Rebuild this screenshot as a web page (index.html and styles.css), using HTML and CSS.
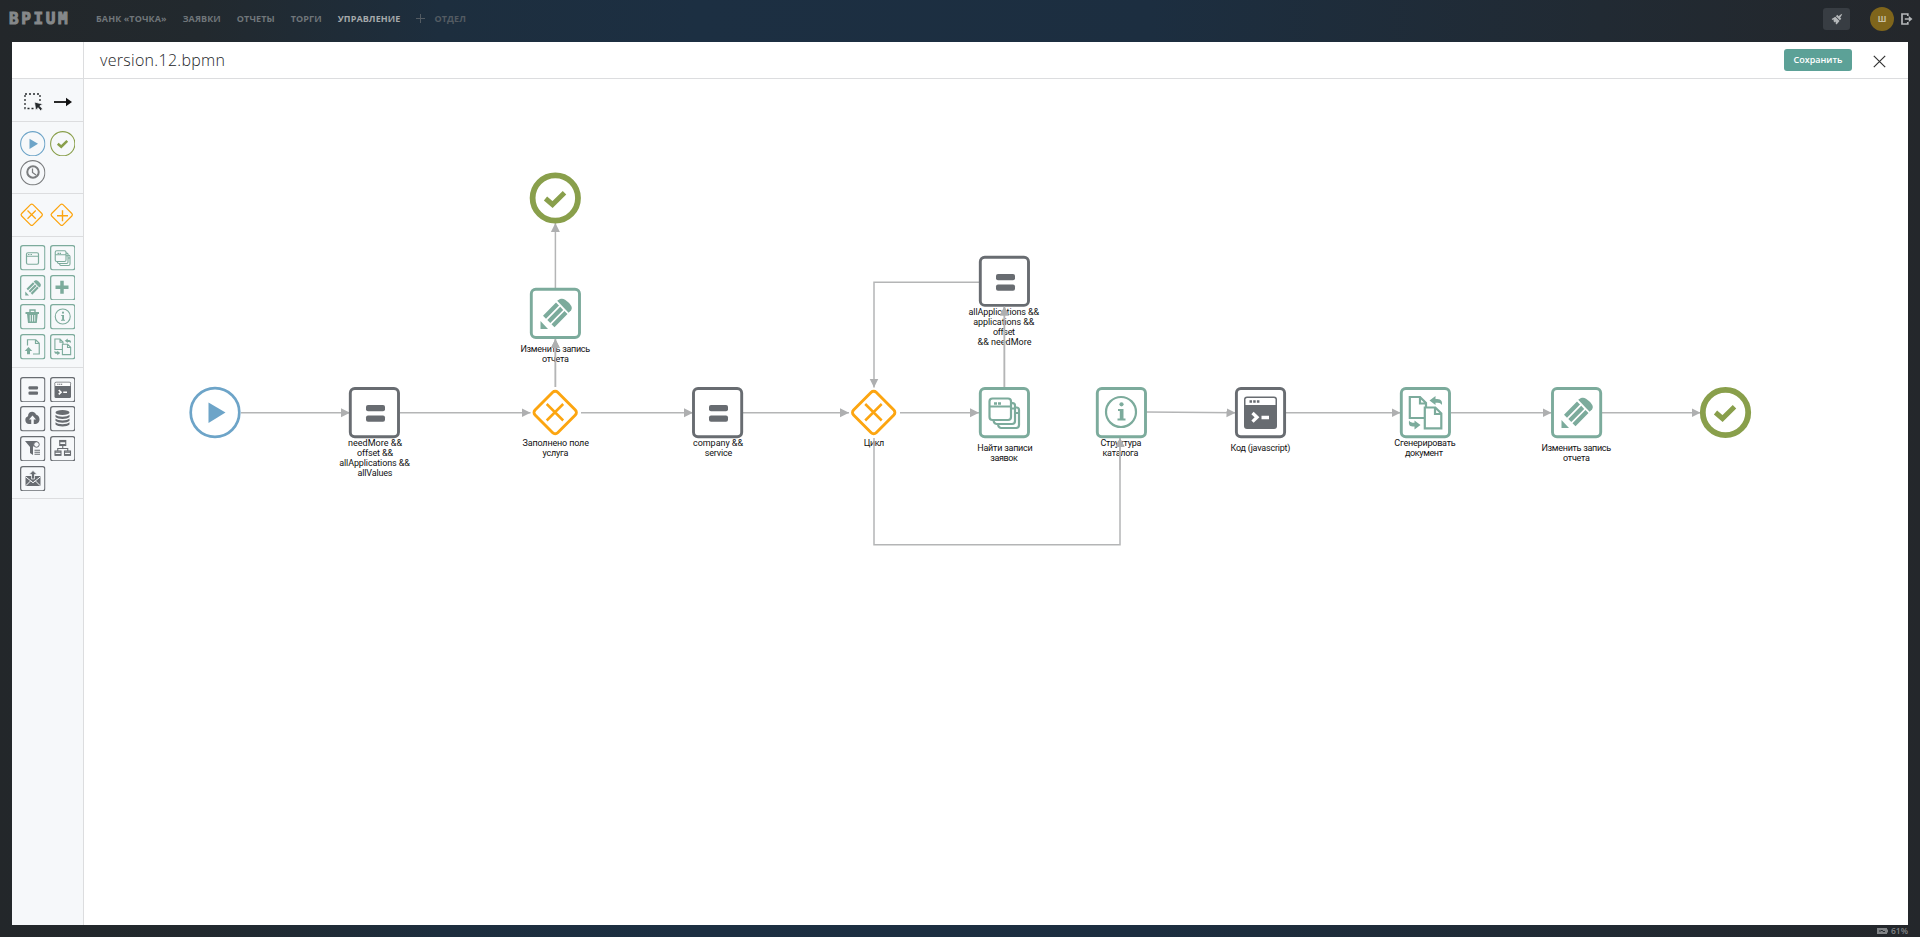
FILE: index.html
```html
<!DOCTYPE html>
<html lang="ru">
<head>
<meta charset="utf-8">
<title>version.12.bpmn</title>
<link rel="stylesheet" href="styles.css">
</head>
<body>
<svg class="sprite" aria-hidden="true">
  <symbol id="i-play" viewBox="0 0 51 51"><path d="M19 15.500 36 25.500 19 36z" fill="currentColor"/></symbol>
  <symbol id="i-check" viewBox="0 0 51 51"><path d="M15.500 25.500l7 6L34.500 19.800" fill="none" stroke="currentColor" stroke-width="5"/></symbol>
  <symbol id="i-clock" viewBox="0 0 51 51"><g fill="none" stroke="currentColor"><circle cx="26" cy="24" r="11.500" stroke-width="4"/><path d="M25 17v8l7 5" stroke-width="2.500"/></g></symbol>
  <symbol id="i-x" viewBox="0 0 51 51"><g fill="none" stroke="currentColor"><rect x="9.500" y="9.500" width="32" height="32" rx="3.500" transform="rotate(45 25.500 25.500)" stroke-width="var(--bw)"/><path d="M17 17l16.500 16.500M33.500 17 17 33.500" stroke-width="2.500"/></g></symbol>
  <symbol id="i-plusgate" viewBox="0 0 51 51"><g fill="none" stroke="currentColor"><rect x="9.500" y="9.500" width="32" height="32" rx="3.500" transform="rotate(45 25.500 25.500)" stroke-width="var(--bw)"/><path d="M16 27.500h22M27 16.500v22" stroke-width="2.800"/></g></symbol>
  <symbol id="i-eq" viewBox="0 0 51 51"><g fill="currentColor"><rect x="17" y="18.500" width="19" height="6.300" rx="2"/><rect x="17" y="29" width="19" height="6.300" rx="2"/></g></symbol>
  <symbol id="i-window" viewBox="0 0 51 51"><g fill="none" stroke="currentColor" stroke-width="2.400"><rect x="13" y="15.500" width="24" height="23" rx="3"/><path d="M13 22.500h24"/><path d="M16 19h8" stroke-dasharray="2 1"/></g></symbol>
  <symbol id="i-windows" viewBox="0 0 51 51"><g fill="none" stroke="currentColor" stroke-width="2.200"><rect x="10.500" y="11.500" width="21.500" height="21.500" rx="3"/><path d="M10.500 19.500H32M32 16.200h1.500a2.500 2.500 0 0 1 2.500 2.500V34a3 3 0 0 1-3 3H17.500a3 3 0 0 1-2.600-4M36 20.500h1.500a2.500 2.500 0 0 1 2.500 2.500V38a3 3 0 0 1-3 3H22a3 3 0 0 1-2.600-4M32 21.500h4M36 26h4"/><path d="M15 16.500h3m1 0h3" stroke-width="2.500"/></g></symbol>
  <symbol id="i-pencil" viewBox="0 0 51 51"><g fill="currentColor"><path d="M10.500 33v8h7.500z"/><path d="M27.200 12.800 30 11c3-1 5 0 8.500 3.500S42.500 20 41 22.500L38.600 24.800z"/><path d="M26 14.500 13 27.700l3 3L29 17.500zM30.200 18.800 17.300 32l3 3L33.200 22zM34.500 23 21.500 36.200l3 3.100L37.500 26z"/></g></symbol>
  <symbol id="i-plus" viewBox="0 0 51 51"><path d="M11 24.500h26M24 11.500v26" stroke="currentColor" stroke-width="7"/></symbol>
  <symbol id="i-trash" viewBox="0 0 51 51"><g fill="none" stroke="currentColor"><path d="M11 18h27" stroke-width="4"/><path d="M20 17v-5h10v5" stroke-width="2.800"/><path d="M14 20l2 18h17.500l2-18" fill="currentColor" stroke="none"/><path d="M20.500 22v13M25 22v13M29.500 22v13" stroke="#f6f8fa" stroke-width="1.800"/></g></symbol>
  <symbol id="i-info" viewBox="0 0 51 51"><circle cx="25.500" cy="25" r="15" fill="none" stroke="currentColor" stroke-width="2.200"/><circle cx="26" cy="17.300" r="2.100" fill="currentColor"/><path d="M22.500 22h5.500v9.500h2v2h-8v-2h2.300V24h-1.800z" fill="currentColor"/></symbol>
  <symbol id="i-upload-doc" viewBox="0 0 51 51"><path d="M15 23V11.500h16.500l7 7V40H26M31 11.500V19h7.500" fill="none" stroke="currentColor" stroke-width="2.400"/><path d="M17 26l7.500 8H20v6.500h-6V34H9.500z" fill="currentColor"/></symbol>
  <symbol id="i-docs" viewBox="0 0 51 51"><g fill="none" stroke="currentColor" stroke-width="2.200"><path d="M24 31H9.800V10H20l6 6v4.500M20 10v6.500h6"/><path d="M24.800 20.500h10.500l6 6v14.800H24.800zM35 20.500V27h6.500"/></g><g fill="currentColor"><path d="M29.500 13.500 35.500 9v3c5 0 7 1 6.500 6-1.500-2-3-2.200-6.500-2.200V18z"/><path d="M20.500 38 14.500 42.500v-3c-5 0-6-1-5.500-6 1.500 2 2.500 2.200 5.500 2.200V33.500z"/></g></symbol>
  <symbol id="i-code" viewBox="0 0 51 51"><path d="M13 9.500h26a3 3 0 0 1 3 3V39a3 3 0 0 1-3 3H12a3 3 0 0 1-3-3V12.500a3 3 0 0 1 3-3z" fill="currentColor"/><path d="M12 11h27a1.500 1.500 0 0 1 1.500 1.500V18h-30v-5.500A1.500 1.500 0 0 1 12 11z" fill="#fff"/><path d="M14.500 14.500h2.500m1.200 0h2.500m1.200 0h2.500" stroke="currentColor" stroke-width="2.300"/><path d="m17.500 26 4.500 4.300-4.500 4.300M26.500 30.500H34" fill="none" stroke="#fff" stroke-width="3.300"/></symbol>
  <symbol id="i-cloud" viewBox="0 0 51 51"><path d="M18 36a8 8 0 0 1-2-15.500C16 10 29 9 32 17c9 2 10 17 0 19z" fill="currentColor"/><path d="m25 19 7 8h-4.500v10h-5V27H18z" fill="#f6f8fa"/></symbol>
  <symbol id="i-db" viewBox="0 0 51 51"><ellipse cx="25" cy="13" rx="14" ry="5" fill="currentColor"/><path d="M11 17.500c4 5 24 5 28 0V22c-4 5-24 5-28 0zM11 25c4 5 24 5 28 0v4.500c-4 5-24 5-28 0zM11 32.500c4 5 24 5 28 0V37c-4 5-24 5-28 0z" fill="currentColor"/></symbol>
  <symbol id="i-filter" viewBox="0 0 51 51"><path d="M10 10h25L26 22v16l-6-4V22z" fill="currentColor"/><circle cx="33" cy="17" r="5.500" fill="#f6f8fa" stroke="currentColor" stroke-width="2"/><path d="M29 28.500h11M29 32.500h11M29 36.500h11" stroke="currentColor" stroke-width="2.400"/></symbol>
  <symbol id="i-tree" viewBox="0 0 51 51"><g fill="none" stroke="currentColor" stroke-width="2.200"><rect x="19.500" y="9" width="12" height="10"/><rect x="10" y="30" width="12" height="8.500"/><rect x="29" y="30" width="12" height="8.500"/><path d="M25.500 19v6M15.500 30v-5h20v5"/></g><path d="M19 9h13v3.500H19zM20 16h11v3H20zM10 31h12v2.500H10zM29 31h12v2.500H29zM10 36h12v3H10zM29 36h12v3H29z" fill="currentColor"/></symbol>
  <symbol id="i-mail" viewBox="0 0 51 51"><path d="M11 20h30v20H11z" fill="currentColor"/><path d="m11 21.500 15 12 15-12M11.500 39.500l10-10M40.500 39.500l-10-10" fill="none" stroke="#f6f8fa" stroke-width="2"/><path d="m26 9 8 8h-5v9h-6v-9h-5z" fill="currentColor" stroke="#f6f8fa" stroke-width="1.500"/></symbol>
  <symbol id="f-circle" viewBox="0 0 51 51"><circle cx="25.500" cy="25.500" r="24.300" fill="none" stroke="currentColor" stroke-width="2.200"/></symbol>
  <symbol id="f-box" viewBox="0 0 51 51"><rect x="1.300" y="1.300" width="48.400" height="48.400" rx="4.500" fill="none" stroke="currentColor" stroke-width="2.500"/></symbol>
</svg>

<header class="topbar">
  <div class="logo">BPIUM</div>
  <nav class="menu">
    <a>БАНК «ТОЧКА»</a><a>ЗАЯВКИ</a><a>ОТЧЕТЫ</a><a>ТОРГИ</a><a class="active">УПРАВЛЕНИЕ</a>
    <a class="add"><svg width="9" height="9" viewBox="0 0 9 9"><path d="M0 4.500h9M4.500 0v9" stroke="currentColor"/></svg>ОТДЕЛ</a>
  </nav>
  <div class="tools">
    <span class="brush"><svg width="12" height="12" viewBox="0 0 12 12"><path d="M11.200.7c-1.200.4-2.500 1.500-3.500 2.500L6.300 1.800 4.900 3.200l4 4 1.400-1.400-1.200-1.300c.9-1 1.800-2.400 2.100-3.800z" fill="currentColor"/><path d="M4.300 3.700.6 6l1 1L3 6.600l-.6 1.500 1.300 1.300 1.200-1-.3 2 1 1L8.500 7.900z" fill="currentColor"/></svg></span>
    <span class="avatar">Ш</span>
    <svg class="exit" width="12" height="12" viewBox="0 0 12 12"><path d="M6.800 3V1H1v10h5.800V9" fill="none" stroke="currentColor" stroke-width="1.700"/><path d="M3.800 5.200h4V3L11.500 6 7.800 9V6.800h-4z" fill="currentColor"/></svg>
  </div>
</header>

<main class="window">
  <header class="head">
    <div class="corner"></div>
    <h1>version.12.bpmn</h1>
    <button class="save">Сохранить</button>
    <svg class="close" width="13" height="13" viewBox="0 0 13 13"><path d="M.8.8l11.400 11.400M12.200.8.8 12.200" stroke="currentColor" stroke-width="1.200"/></svg>
  </header>
  <div class="body">
    <aside class="palette">
      <section class="modes">
        <svg width="19" height="18" viewBox="0 0 19 18"><path d="M1 1h15v14.500H1z" fill="none" stroke="#25292c" stroke-width="1.300" stroke-dasharray="2 2"/><path d="m10.500 9 1.200 8.300 2.300-2.600 2.500 3 2-1.800-2.700-3 3-1.700z" fill="#25292c" stroke="#f6f8fa" stroke-width=".8"/></svg>
        <svg width="18" height="10" viewBox="0 0 18 10"><path d="M0 5h14" stroke="#111" stroke-width="1.800"/><path d="m12 .8 6 4.200-6 4.200z" fill="#111"/></svg>
      </section>
      <section class="grid events">
        <svg class="blue"><use href="#f-circle"/><use href="#i-play"/></svg>
        <svg class="olive"><use href="#f-circle"/><use href="#i-check"/></svg>
        <svg class="gray"><use href="#f-circle"/><use href="#i-clock"/></svg>
      </section>
      <section class="grid gates">
        <svg class="orange"><use href="#i-x"/></svg>
        <svg class="orange"><use href="#i-plusgate"/></svg>
      </section>
      <section class="grid records">
        <svg class="green"><use href="#f-box"/><use href="#i-window"/></svg>
        <svg class="green"><use href="#f-box"/><use href="#i-windows"/></svg>
        <svg class="green"><use href="#f-box"/><use href="#i-pencil"/></svg>
        <svg class="green"><use href="#f-box"/><use href="#i-plus"/></svg>
        <svg class="green"><use href="#f-box"/><use href="#i-trash"/></svg>
        <svg class="green"><use href="#f-box"/><use href="#i-info"/></svg>
        <svg class="green"><use href="#f-box"/><use href="#i-upload-doc"/></svg>
        <svg class="green"><use href="#f-box"/><use href="#i-docs"/></svg>
      </section>
      <section class="grid services">
        <svg class="slate"><use href="#f-box"/><use href="#i-eq"/></svg>
        <svg class="slate"><use href="#f-box"/><use href="#i-code"/></svg>
        <svg class="slate"><use href="#f-box"/><use href="#i-cloud"/></svg>
        <svg class="slate"><use href="#f-box"/><use href="#i-db"/></svg>
        <svg class="slate"><use href="#f-box"/><use href="#i-filter"/></svg>
        <svg class="slate"><use href="#f-box"/><use href="#i-tree"/></svg>
        <svg class="slate"><use href="#f-box"/><use href="#i-mail"/></svg>
      </section>
    </aside>
    <svg class="canvas" width="1824" height="846" viewBox="84 79 1824 846">
      <defs>
        <marker id="arrow" markerUnits="userSpaceOnUse" markerWidth="10" markerHeight="10" refX="9" refY="5" orient="auto"><path d="M0 .5 9 5 0 9.500z" fill="#aeafb0"/></marker>
      </defs>
      <g class="labels">
        <text x="375" y="445.500" textLength="54">needMore &amp;&amp;</text><text x="375" y="455.500" textLength="36">offset &amp;&amp;</text><text x="374.500" y="465.500" textLength="70.500">allApplications &amp;&amp;</text><text x="375" y="475.500" textLength="35">allValues</text>
        <text x="555.300" y="352" textLength="69.700">Изменить запись</text><text x="555.500" y="362" textLength="27">отчета</text>
        <text x="555.700" y="446" textLength="66.500">Заполнено поле</text><text x="555.500" y="456" textLength="26">услуга</text>
        <text x="718" y="446" textLength="50">company &amp;&amp;</text><text x="718.500" y="456" textLength="27.500">service</text>
        <text x="874" y="446" textLength="20.500">Цикл</text>
        <text x="1003.800" y="314.500" textLength="70.500">allApplications &amp;&amp;</text><text x="1003.800" y="324.500" textLength="61">applications &amp;&amp;</text><text x="1004" y="334.500" textLength="22">offset</text><text x="1004.500" y="344.500" textLength="54">&amp;&amp; needMore</text>
        <text x="1005" y="451" textLength="55.500">Найти записи</text><text x="1004" y="461" textLength="27.500">заявок</text>
        <text x="1121" y="446" textLength="41">Структура</text><text x="1120.500" y="456" textLength="36">каталога</text>
        <text x="1260.500" y="451" textLength="60">Код (javascript)</text>
        <text x="1425" y="446" textLength="61.500">Сгенерировать</text><text x="1424" y="456" textLength="38">документ</text>
        <text x="1576.300" y="451" textLength="69.700">Изменить запись</text><text x="1576.500" y="461" textLength="27">отчета</text>
      </g>
      <g class="flows">
        <path d="M241 412.700H350"/><path d="M400 412.700H530.500"/><path d="M581 412.700H693"/><path d="M743 412.700H849"/><path d="M900 412.700H979"/>
        <path d="M555.400 387V339"/><path d="M555.400 288V223"/>
        <path d="M1004.400 387V306.500"/><path d="M979 282.300H874V387.500"/>
        <path d="M874 438v106.700H1120V438"/>
        <path d="M1146 412 1235.500 412.700"/><path d="M1286 412.700H1400.500"/><path d="M1451 412.700H1551.500"/><path d="M1602 412.700H1700.500"/>
      </g>
      <g class="nodes">
        <g class="blue"><circle cx="215" cy="412.500" r="24.300" stroke-width="2.700"/><use href="#i-play" x="189.500" y="387" width="51" height="51"/></g>
        <g class="slate"><rect x="350.300" y="388.500" width="48.200" height="48.200" rx="4.500"/><use href="#i-eq" x="349" y="386.500" width="51" height="51"/></g>
        <g class="olive"><circle cx="555.300" cy="198" r="22.700" stroke-width="5.800"/><use href="#i-check" x="530" y="173" width="51" height="51"/></g>
        <g class="green"><rect x="531.300" y="289.300" width="48.200" height="48.200" rx="4.500"/><use href="#i-pencil" x="530" y="288" width="51" height="51"/></g>
        <use class="orange gate" href="#i-x" x="529.700" y="387" width="51" height="51"/>
        <g class="slate"><rect x="693.500" y="388.500" width="48.200" height="48.200" rx="4.500"/><use href="#i-eq" x="692" y="386.500" width="51" height="51"/></g>
        <use class="orange gate" href="#i-x" x="848.200" y="387" width="51" height="51"/>
        <g class="slate"><rect x="980.300" y="257.200" width="48.200" height="48.200" rx="4.500"/><use href="#i-eq" x="979" y="255.500" width="51" height="51"/></g>
        <g class="green"><rect x="980.300" y="388.500" width="48.200" height="48.200" rx="4.500"/><use href="#i-windows" x="979" y="387" width="51" height="51"/></g>
        <g class="green"><rect x="1097.300" y="388.500" width="48.200" height="48.200" rx="4.500"/><use href="#i-info" x="1095.500" y="387" width="51" height="51"/></g>
        <g class="slate"><rect x="1236.400" y="388.500" width="48.200" height="48.200" rx="4.500"/><use href="#i-code" x="1235" y="387" width="51" height="51"/></g>
        <g class="green"><rect x="1401.300" y="388.500" width="48.200" height="48.200" rx="4.500"/><use href="#i-docs" x="1400" y="387" width="51" height="51"/></g>
        <g class="green"><rect x="1552.500" y="388.500" width="48.200" height="48.200" rx="4.500"/><use href="#i-pencil" x="1551" y="387" width="51" height="51"/></g>
        <g class="olive"><circle cx="1725.500" cy="412.500" r="22.700" stroke-width="5.800"/><use href="#i-check" x="1700" y="387" width="51" height="51"/></g>
      </g>
      <g class="flows over">
        <path d="M555.400 387V339"/><path d="M1004.400 387V306.500"/><path d="M1120 470V438"/>
      </g>
    </svg>
  </div>
</main>
<footer class="status">
  <svg width="11" height="6" viewBox="0 0 11 6"><path d="M0 0h10v1.500h1v3h-1V6H0z" fill="currentColor"/><path d="M2 3h2l1-1 1 1.500h2" fill="none" stroke="#262b30"/></svg>
  <span>61%</span>
</footer>
</body>
</html>
```

FILE: styles.css
```css
* { box-sizing: border-box; }
body {
  margin: 0;
  width: 1920px;
  height: 937px;
  overflow: hidden;
  display: flex;
  flex-direction: column;
  font-family: "Open Sans", "Noto Sans", sans-serif;
  background: linear-gradient(90deg, #23272a 0, #22292e 200px, #1d2e3e 440px, #1c2f42 700px, #1c2e40 1150px, #212a33 1600px, #24272b 1920px);
}
.sprite { display: none; }

.topbar {
  height: 42px;
  flex: none;
  display: flex;
  align-items: flex-start;
  padding: 0 7px 0 9px;
}
.logo {
  width: 87px;
  padding-top: 9px;
  color: #85888a;
  font: 700 16px/20px "DejaVu Sans Mono", monospace;
  letter-spacing: 2.600px;
  -webkit-text-stroke: 1px #85888a;
}
.menu {
  display: flex;
  gap: 16px;
  padding-top: 10px;
  color: #70767a;
  font-size: 9px;
  font-weight: 700;
  letter-spacing: .1px;
  line-height: 17px;
}
.menu .active { color: #a5a9ab; }
.menu .add { display: flex; align-items: center; gap: 9px; color: #535b62; }
.tools {
  display: flex;
  align-items: center;
  margin-left: auto;
  height: 38px;
  color: #b4b7b9;
}
.brush {
  width: 27px;
  height: 22px;
  display: grid;
  place-items: center;
  border-radius: 3px;
  background: #383d43;
  margin-right: 20px;
}
.avatar {
  width: 24px;
  height: 24px;
  border-radius: 50%;
  background: #7f651b;
  color: #c8c1a7;
  font-size: 8px;
  font-weight: 700;
  line-height: 24px;
  text-align: center;
  margin-right: 7px;
}

.window {
  width: 1896px;
  height: 883px;
  margin-left: 12px;
  flex: none;
  background: #fff;
  display: flex;
  flex-direction: column;
}
.head {
  height: 37px;
  flex: none;
  display: flex;
  align-items: center;
  border-bottom: 1px solid #dcdddf;
  padding-right: 22px;
}
.corner { width: 72px; align-self: stretch; border-right: 1px solid #dcdddf; }
.head h1 {
  margin: 0 auto 0 16px;
  font-size: 16px;
  font-weight: 300;
  letter-spacing: .3px;
  line-height: 22px;
  color: #222426;
}
.save {
  width: 68px;
  height: 22px;
  padding: 0;
  border: 0;
  border-radius: 3px;
  background: #5ca197;
  color: #fff;
  font: 600 9px/22px "Open Sans", sans-serif;
  margin-right: 21px;
}
.close { color: #333; margin-top: 2px; }

.body { flex: 1; display: flex; min-height: 0; }
.palette {
  width: 72px;
  flex: none;
  background: #f6f8fa;
  border-right: 1px solid #dcdddf;
}
.palette section { border-bottom: 1px solid #dcdddf; }
.modes { height: 43px; display: flex; align-items: center; padding: 3px 0 0 12px; gap: 11px; }
.grid {
  display: grid;
  grid-template-columns: 25.500px 25.500px;
  grid-auto-rows: 25.500px;
  gap: 4.200px;
  padding-left: 8px;
  align-content: start;
  --bw: 2.500px;
}
.grid svg { width: 25.500px; height: 25.500px; }
.events { height: 72px; padding-top: 8.500px; }
.gates { height: 43px; padding: 8px 0 0 7px; }
.records { height: 131px; padding-top: 8px; }
.services { height: 131px; padding-top: 8.500px; }

.blue { color: #6da4c8; }
.olive { color: #899f4b; }
.gray { color: #7b7d7f; }
.orange { color: #fca510; }
.green { color: #7cab9c; }
.slate { color: #686c71; }
.canvas { display: block; flex: none; }
.nodes circle, .nodes rect { fill: #fff; stroke: currentColor; }
.nodes rect { stroke-width: 2.900px; }
.nodes .gate { --bw: 2.900px; }
.flows path { fill: none; stroke: #b4b5b6; stroke-width: 1.500px; marker-end: url(#arrow); }
.flows marker path { marker-end: none; }
.labels { font: 9px Roboto, "Liberation Sans", sans-serif; fill: #111; text-anchor: middle; }

.status {
  height: 12px;
  display: flex;
  align-items: center;
  justify-content: flex-end;
  gap: 3px;
  padding-right: 12px;
  color: #808386;
  font-size: 8.500px;
  font-weight: 600;
  line-height: 12px;
}
```
